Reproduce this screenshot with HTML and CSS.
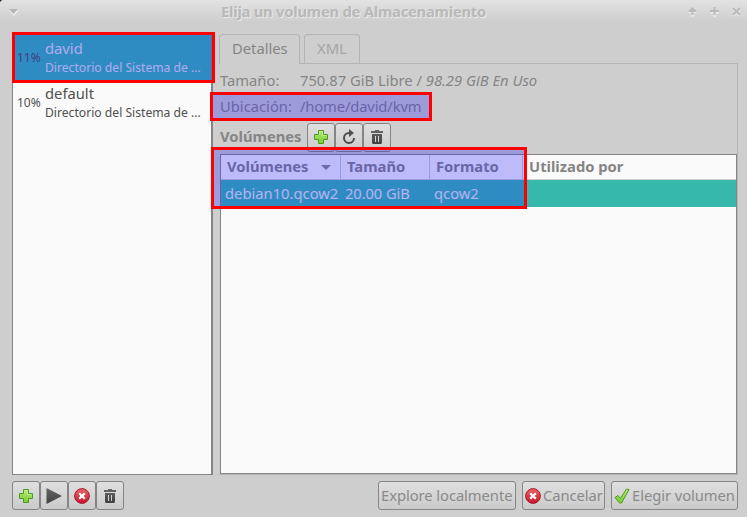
FILE: index.html
```html
<!DOCTYPE html>
<html lang="es">
<head>
<meta charset="utf-8">
<title>Elija un volumen de Almacenamiento</title>
<link rel="stylesheet" href="styles.css">
</head>
<body>
<svg class="defs" width="0" height="0" aria-hidden="true">
  <defs>
    <linearGradient id="green" x1="0" y1="0" x2="0" y2="1"><stop offset="0" stop-color="#b5e67b"/><stop offset="1" stop-color="#75cf2c"/></linearGradient>
    <linearGradient id="red" x1="0" y1="0" x2="0" y2="1"><stop offset="0" stop-color="#e96666"/><stop offset="1" stop-color="#c8142c"/></linearGradient>
    <linearGradient id="dark" x1="0" y1="0" x2="0" y2="1"><stop offset="0" stop-color="#666"/><stop offset="1" stop-color="#404040"/></linearGradient>
    <symbol id="plus" viewBox="0 0 16 16"><path d="M5.500 1.500h5v4h4v5h-4v4h-5v-4h-4v-5h4z" fill="url(#green)" stroke="#4e9a1e" stroke-linejoin="round"/><path d="M6.500 5.900V2.500h3v4h4" fill="none" stroke="#cdf0a0" opacity=".7"/></symbol>
    <symbol id="trash" viewBox="0 0 16 16"><path d="M2 2h4V1h4v1h4v2H2zM3 5h10v8.500a1.500 1.500 0 0 1-1.500 1.500h-7A1.500 1.500 0 0 1 3 13.500z" fill="url(#dark)"/><path d="M6.500 7v6M9.500 7v6" stroke="#d4d4d4"/></symbol>
    <symbol id="stop" viewBox="0 0 16 16"><circle cx="8" cy="8" r="7.400" fill="url(#red)" stroke="#a51d30"/><path d="M5.200 5.200l5.600 5.600M10.800 5.200l-5.600 5.600" stroke="#fff" stroke-width="2.300"/></symbol>
    <symbol id="reload" viewBox="0 0 16 16"><path d="M9 4H8a5 5 0 1 0 5 5" fill="none" stroke="#4b4b4b" stroke-width="2"/><path d="M8 0l5 4-5 4z" fill="#505050"/></symbol>
    <symbol id="check" viewBox="0 0 16 16"><path d="M1 9.500l3-2 2.200 3.200L12.500 1l2.500.6L7.500 15H5.600z" fill="url(#green)" stroke="#4e9a1e" stroke-linejoin="round"/></symbol>
  </defs>
</svg>
<div class="window">
  <header class="titlebar">
    <svg class="menu" width="10" height="7"><path d="M0 1h10L5 7z" fill="#eee"/><path d="M0 0h9L4.500 5z" fill="#b5b5b5"/></svg>
    <h1>Elija un volumen de Almacenamiento</h1>
    <div class="controls">
      <svg width="9" height="10"><path d="M4.500 1L8.500 5v1h-3v4h-2V6h-3V5z" fill="#eee"/><path d="M4.500 0L8.500 4v1h-3v3h-2V5h-3V4z" fill="#bababa"/></svg>
      <svg width="9" height="10"><path d="M4.500 1v9M0 5.500h9" stroke="#eee" stroke-width="2"/><path d="M4.500 0v8M0 4h9" stroke="#bababa" stroke-width="2"/></svg>
      <svg width="9" height="10"><path d="M1 2l7 7M8 2l-7 7" stroke="#eee" stroke-width="2"/><path d="M1 1l7 7M8 1l-7 7" stroke="#bababa" stroke-width="2"/></svg>
    </div>
  </header>
  <main class="content">
    <aside class="pools">
      <div class="pool selected"><span class="pct">11%</span><div><div class="name">david</div><div class="kind">Directorio del Sistema de ...</div></div></div>
      <div class="pool"><span class="pct">10%</span><div><div class="name">default</div><div class="kind">Directorio del Sistema de ...</div></div></div>
    </aside>
    <section class="notebook">
      <nav class="tabs"><div class="tab active">Detalles</div><div class="tab">XML</div></nav>
      <div class="page">
        <div class="info"><span>Tamaño:</span><span class="size">750.87 GiB Libre / <i>98.29 GiB En Uso</i></span></div>
        <div class="info"><span>Ubicación:</span><span class="path">/home/david/kvm</span></div>
        <div class="tools"><b>Volúmenes</b><div class="group">
          <button><svg width="16" height="16"><use href="#plus"/></svg></button><button><svg width="16" height="16"><use href="#reload"/></svg></button><button><svg width="16" height="16"><use href="#trash"/></svg></button>
        </div></div>
        <div class="table">
          <div class="row head"><div>Volúmenes<svg width="10" height="5"><path d="M0 0h10L5 5z" fill="#8c8c8c"/></svg></div><div>Tamaño</div><div>Formato</div><div>Utilizado por</div></div>
          <div class="row body"><div>debian10.qcow2</div><div>20.00 GiB</div><div>qcow2</div><div></div></div>
        </div>
      </div>
    </section>
  </main>
  <footer class="actions">
    <div class="group">
      <button><svg width="16" height="16"><use href="#plus"/></svg></button><button><svg width="16" height="16"><path d="M.5 0L16 8 .5 16z" fill="url(#dark)"/></svg></button><button><svg width="16" height="16"><use href="#stop"/></svg></button><button><svg width="16" height="16"><use href="#trash"/></svg></button>
    </div>
    <div class="choices">
      <button class="browse"><span>Explore localmente</span></button>
      <button class="cancel"><svg width="16" height="16"><use href="#stop"/></svg><span>Cancelar</span></button>
      <button class="choose"><svg width="16" height="16"><use href="#check"/></svg><span>Elegir volumen</span></button>
    </div>
  </footer>
  <div class="mark mark-pool"></div>
  <div class="mark mark-path"></div>
  <div class="mark mark-volume"></div>
</div>
</body>
</html>
```
FILE: styles.css
```css
* { box-sizing: border-box; }
body { margin: 0; font: 14.75px/20px "Noto Sans", sans-serif; color: #858585; background: #000; }
svg { display: block; flex: none; }
.defs { position: absolute; }
.window { position: relative; width: 747px; height: 517px; overflow: hidden; display: flex; flex-direction: column; background: linear-gradient(#e2e2e2, #cecece 22px); border-top-left-radius: 3px; }
.titlebar { height: 32px; flex: none; display: flex; padding: 0 6px 0 9px; }
.titlebar .menu { margin-top: 9px; }
h1 { margin: 1px 0 0 202px; font-size: 14.750px; letter-spacing: -.23px; line-height: 20px; color: #b9b9b9; text-shadow: 1px 1px #e8e8e8; white-space: nowrap; }
.controls { display: flex; gap: 13px; padding-top: 7px; margin-left: auto; }
.content { display: flex; height: 443px; padding: 0 9px 0 12px; gap: 6px; }
.pools { width: 201px; border: 1px solid #858585; border-right-width: 2px; background: #fafafa; }
.pool { height: 45px; display: flex; align-items: center; gap: 4px; padding: 0 0 1px 4px; color: #505050; white-space: nowrap; }
.pool.selected { height: 48px; padding: 2px 0 0 4px; background: #36b9ac; }
.pct { width: 24px; font-size: 12px; }
.name { line-height: 20px; }
.kind { font-size: 12.150px; line-height: 20px; }
.selected .name, .selected .kind { color: #e4e4ea; }
.notebook { flex: 1; display: flex; flex-direction: column; }
.tabs { display: flex; gap: 4px; height: 31px; padding-top: 2px; }
.tab { height: 30px; border: 1px solid #b5b5b5; border-bottom: 0; border-radius: 4px 4px 0 0; padding: 3px 12px; color: #a5a5a5; width: 56px; }
.tab.active { position: relative; width: 81px; color: #858585; background: #cecece; }
.page { flex: 1; border: 1px solid #b5b5b5; border-left: 0; display: flex; flex-direction: column; }
.info { display: flex; height: 26px; align-items: center; padding: 6px 0 0 1px; white-space: nowrap; }
.info > span:first-child { width: 80px; }
.path { letter-spacing: -.14px; }
.tools { display: flex; height: 38px; padding: 7px 0 0 1px; }
.tools b { width: 87px; padding-top: 3px; }
.tools button { padding-bottom: 2px; }
.group { display: flex; }
button { height: 29px; min-width: 28px; padding: 0 5px; border: 1px solid #858585; border-radius: 3px; background: linear-gradient(#dfdfdf, #cbcbcb); font: inherit; color: #8a8a8a; display: flex; align-items: center; white-space: nowrap; }
button span { padding-bottom: 1px; }
.table { flex: 1; margin: 0 0 0 1px; border: 1px solid #858585; background: #fafafa; }
.row { display: grid; grid-template-columns: 120px 89px 93px 1fr; white-space: nowrap; }
.head { height: 25px; font-weight: 700; border-bottom: 1px solid #cecece; }
.head div { padding: 0 6px 2px; border-right: 1px solid #cecece; display: flex; align-items: center; justify-content: space-between; }
.head svg { position: relative; top: 1px; }
.head div:first-child { padding-right: 9px; }
.head div:last-child { border: 0; }
.body { height: 27px; background: #36b9ac; color: #ededed; }
.body div { padding: 3px 4px; }
.body div:nth-child(2) { letter-spacing: -.1px; }
.actions { display: flex; justify-content: space-between; padding: 6px 9px 0 12px; }
.choices { display: flex; gap: 6px; }
.choices span { letter-spacing: -.06px; }
.browse { width: 138px; padding: 0 2px; }
.cancel { width: 83px; padding: 0 2px; gap: 2px; }
.choose { width: 127px; padding: 0 2px; gap: 2px; }
.mark { position: absolute; border: 3px solid #f00; background: rgba(28, 20, 255, .27); background-clip: padding-box; }
.mark-pool { left: 12px; top: 32px; width: 203px; height: 51px; }
.mark-path { left: 210px; top: 92px; width: 222px; height: 29px; }
.mark-volume { left: 211px; top: 147px; width: 316px; height: 62px; }
```
